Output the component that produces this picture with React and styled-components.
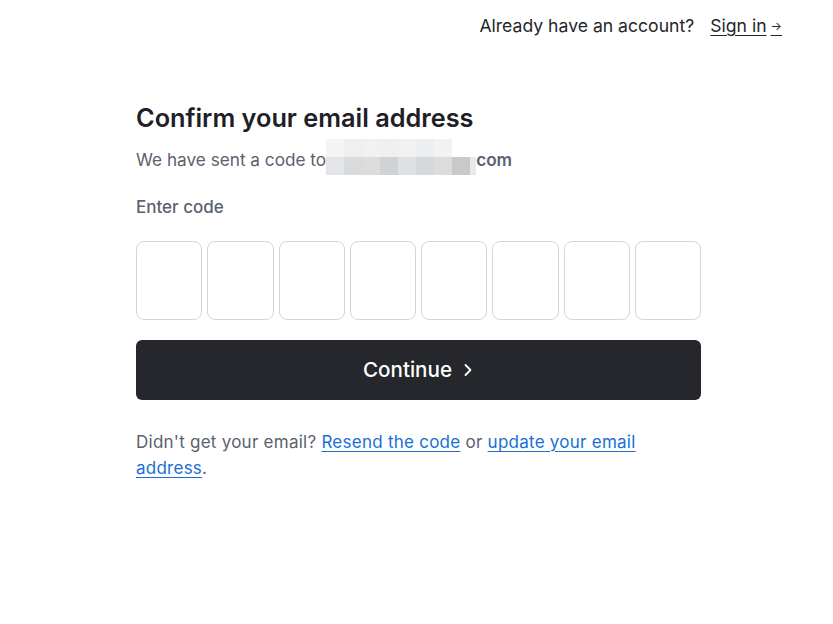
import React from 'react';
import styled, { createGlobalStyle } from 'styled-components';

const GlobalStyle = createGlobalStyle`
  html, body {
    margin: 0;
    padding: 0;
    background: #fff;
  }
  body {
    font-family: Inter, "Noto Sans", sans-serif;
    color: #1e2025;
  }
`;

const Page = styled.div`
  width: 833px;
  height: 624px;
  display: flex;
  flex-direction: column;
`;

const TopBar = styled.header`
  display: flex;
  justify-content: flex-end;
  align-items: center;
  gap: 16px;
  height: 51px;
  padding-right: 51px;
  font-size: 17.6px;
  color: #24262b;
`;

const SignIn = styled.a`
  color: #24262b;
  text-decoration: underline;
  text-underline-offset: 3px;
  cursor: pointer;
`;

const Arrow = styled.span`
  font-size: 12px;
  margin-left: 4px;
  vertical-align: 2px;
`;

const Main = styled.main`
  width: 565px;
  margin: 51px 0 0 136px;
  display: flex;
  flex-direction: column;
`;

const Title = styled.h1`
  margin: 0;
  font-size: 25.3px;
  font-weight: 600;
  line-height: 32px;
  color: #1e2025;
`;

const Sub = styled.p`
  margin: 16px 0 0;
  font-size: 17.2px;
  line-height: 20px;
  color: #5b616e;
  display: flex;
  align-items: center;
`;

const Redacted = styled.span`
  display: inline-grid;
  grid-template-columns: repeat(8, 18px) 6px;
  grid-template-rows: 18px 18px;
  margin: -21px 0 -15px 0;
`;

const Cell = styled.span`
  background: ${p => p.$c};
`;

const Bold = styled.span`
  font-weight: 600;
  color: #5b616e;
`;

const Label = styled.div`
  margin-top: 27px;
  font-size: 17px;
  line-height: 20px;
  color: #5b616e;
  font-weight: 500;
`;

const CodeRow = styled.div`
  display: flex;
  gap: 5px;
  margin-top: 24px;
`;

const CodeBox = styled.input`
  flex: 1;
  min-width: 0;
  height: 79px;
  box-sizing: border-box;
  border: 1px solid #d1d6dd;
  border-radius: 8px;
  background: #fff;
  font: inherit;
  font-size: 24px;
  text-align: center;
  outline: none;
`;

const Button = styled.button`
  margin-top: 20px;
  height: 60px;
  border: none;
  border-radius: 6px;
  background: #25272c;
  color: #fff;
  font-family: inherit;
  font-size: 20.6px;
  font-weight: 500;
  display: flex;
  align-items: center;
  justify-content: center;
  gap: 10px;
  padding-bottom: 2px;
  cursor: pointer;
`;

const Help = styled.p`
  margin: 29px 0 0;
  font-size: 17px;
  letter-spacing: 0.25px;
  line-height: 26px;
  color: #5b616e;
`;

const Link = styled.a`
  color: #1a6fd3;
  text-decoration: underline;
  text-underline-offset: 3px;
  cursor: pointer;
`;

const top = ['#f4f4f5', '#efeff0', '#f0f1f1', '#f0f0f1', '#f1f1f2', '#edeef0', '#f2f2f3', '#fff', '#fff'];
const bottom = ['#e4e5e6', '#d9dadc', '#dcdcdd', '#cfd3d6', '#dfe0e1', '#d7d8da', '#dcdcdd', '#c9c9cc', '#e9e9ea'];

export default function App() {
  return (
    <Page>
      <GlobalStyle />
      <TopBar>
        <span>Already have an account?</span>
        <SignIn>Sign in<Arrow>→</Arrow></SignIn>
      </TopBar>
      <Main>
        <Title>Confirm your email address</Title>
        <Sub>
          We have sent a code to
          <Redacted>
            {top.map((c, i) => <Cell key={'t' + i} $c={c} />)}
            {bottom.map((c, i) => <Cell key={'b' + i} $c={c} />)}
          </Redacted>
          <Bold>com</Bold>
        </Sub>
        <Label>Enter code</Label>
        <CodeRow>
          {Array.from({ length: 8 }).map((_, i) => (
            <CodeBox key={i} maxLength={1} />
          ))}
        </CodeRow>
        <Button>
          Continue
          <svg width="12" height="14" viewBox="0 0 12 14" fill="none">
            <path d="M3.5 2l5 5-5 5" stroke="#fff" strokeWidth="1.8" strokeLinecap="round" strokeLinejoin="round" />
          </svg>
        </Button>
        <Help>
          Didn't get your email? <Link>Resend the code</Link> or <Link>update your email address</Link>.
        </Help>
      </Main>
    </Page>
  );
}
